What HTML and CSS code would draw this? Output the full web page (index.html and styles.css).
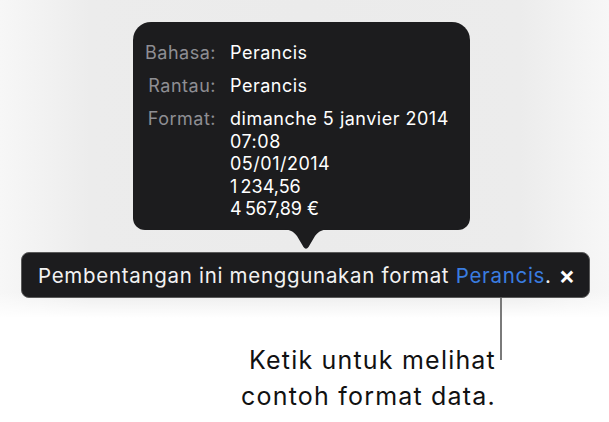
FILE: index.html
```html
<!DOCTYPE html>
<html>
<head>
<meta charset="utf-8">
<link rel="stylesheet" href="styles.css">
</head>
<body>
<div class="stage">
  <div class="popover">
    <div class="row">
      <div class="label">Bahasa:</div>
      <div class="value">Perancis</div>
    </div>
    <div class="row">
      <div class="label">Rantau:</div>
      <div class="value">Perancis</div>
    </div>
    <div class="row">
      <div class="label">Format:</div>
      <div class="value lines">
        <span>dimanche 5 janvier 2014</span>
        <span>07:08</span>
        <span>05/01/2014</span>
        <span>1&#8239;234,56</span>
        <span>4&#8239;567,89 €</span>
      </div>
    </div>
    <svg class="arrow" width="50" height="22" viewBox="0 0 50 22">
      <path d="M0 0 C8 0 12 2 16 7 L22.5 18 Q25 21.5 27.5 18 L34 7 C38 2 42 0 50 0 Z" fill="#1c1c1e"/>
    </svg>
  </div>
  <div class="banner">
    <span class="msg">Pembentangan ini menggunakan format <span class="link">Perancis</span>.</span>
    <span class="close">×</span>
    <span class="leader"></span>
  </div>
</div>
<div class="caption">
  <p>Ketik untuk melihat<br>contoh format data.</p>
</div>
</body>
</html>
```
FILE: styles.css
```css
html, body {
  margin: 0;
  padding: 0;
  background: #ffffff;
  font-family: Inter, "Noto Sans", "Liberation Sans", sans-serif;
}

.stage {
  height: 318px;
  box-sizing: border-box;
  padding-top: 22px;
  background:
    linear-gradient(to bottom, rgba(255,255,255,0) 0, rgba(255,255,255,0) 292px, #ffffff 318px),
    linear-gradient(to right, #f7f7f7 0, #ececec 90px, #ebebeb 50%, #ececec 520px, #f7f7f7 609px);
}

.popover {
  position: relative;
  margin-left: 133px;
  width: 337px;
  height: 208px;
  box-sizing: border-box;
  padding-top: 20px;
  background: #1c1c1e;
  border-radius: 18px 18px 12px 12px;
  color: #ffffff;
  font-size: 18px;
  letter-spacing: 0.5px;
}

.arrow {
  position: absolute;
  left: 148px;
  top: 207px;
  display: block;
}

.row {
  display: flex;
  align-items: flex-start;
  line-height: 22.5px;
  margin-bottom: 10.5px;
}

.label {
  flex: none;
  width: 83px;
  text-align: right;
  color: #8e8e93;
  padding-right: 14px;
}

.value {
  flex: none;
  white-space: nowrap;
}

.lines {
  display: flex;
  flex-direction: column;
}

.banner {
  position: relative;
  margin: 22px 19px 0 21px;
  height: 46px;
  box-sizing: border-box;
  padding: 0 13px 0 16px;
  display: flex;
  align-items: center;
  justify-content: space-between;
  background: #1c1c1e;
  border: 1px solid #5a5a5a;
  border-radius: 8px;
  color: #f2f2f2;
  font-size: 20.5px;
  letter-spacing: 0.7px;
}

.link {
  color: #3a7de0;
}

.close {
  font-size: 25px;
  font-weight: 600;
  color: #ffffff;
}

.leader {
  position: absolute;
  left: 478px;
  top: 45px;
  width: 2px;
  height: 62px;
  background: #7a7a7a;
}

.caption {
  display: flex;
  justify-content: flex-end;
  padding-right: 113px;
}

.caption p {
  margin: 24px 0 0 0;
  text-align: right;
  font-size: 25px;
  line-height: 36px;
  letter-spacing: 1.2px;
  color: #111111;
}
```
